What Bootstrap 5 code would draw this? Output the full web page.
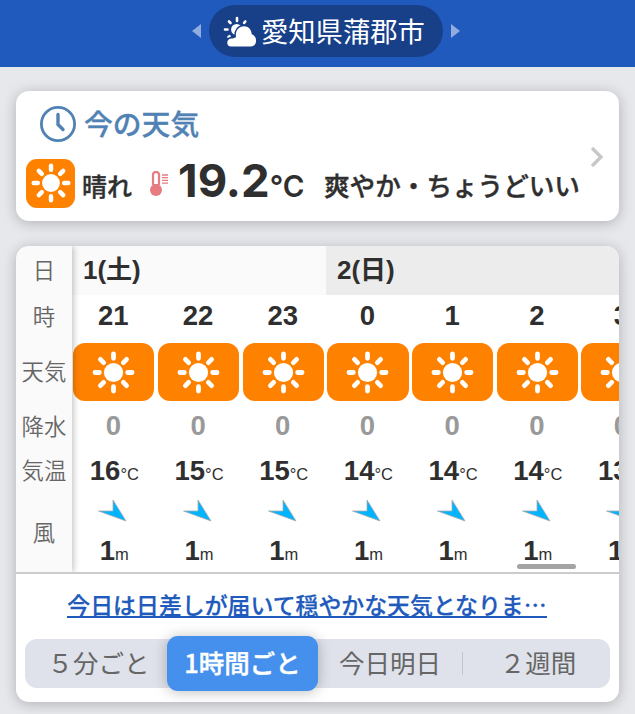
<!DOCTYPE html>
<html lang="ja">
<head>
<meta charset="utf-8">
<meta name="viewport" content="width=device-width, initial-scale=1">
<title>愛知県蒲郡市の天気</title>
<link href="https://cdn.jsdelivr.net/npm/bootstrap@5.3.0/dist/css/bootstrap.min.css" rel="stylesheet">
<style>
body{font-family:"Noto Sans CJK JP",sans-serif;background:#e7e8ec;color:#2f2f2f;height:714px;overflow:hidden;line-height:1}
.topbar{height:67px;background:#205abc;padding-bottom:5px;gap:8px;padding-left:17px}
.topbar .tri{fill:#91acdd}
.place{width:234px;height:52px;background:#184089;color:#fff;font-size:27.3px;padding-left:14px;border-radius:26px}
.placename{margin-left:3px}
.panel{margin:0 16px;border:0;border-radius:13px;box-shadow:0 2px 14px rgba(0,0,0,.24)}
.now{margin-top:24px;height:130px;padding:12px 10px 0}
.now-title{font-size:28.8px;font-weight:500;-webkit-text-stroke:.3px;color:#5182b4;padding-left:13px;height:40px;gap:7px}
.now-row{height:52px;margin-top:14px}
.sunbox{width:49px;height:49px;border-radius:11px;background:#ff8100}
.cond{font-size:25px;font-weight:500;-webkit-text-stroke:.4px;margin-left:7px;padding-top:4px}
.thermo{margin:2px 0 0 17px}
.deg{font-family:Inter,sans-serif;font-weight:700;font-size:45.5px;margin-left:9px;line-height:52px;white-space:nowrap;width:127px}
.deg small{font-size:29.5px;font-weight:600}
.feel{font-size:25.6px;font-weight:500;-webkit-text-stroke:.4px;margin-left:19px;padding-top:4px;white-space:nowrap}
.chev{right:15px;top:55px}
.hourly{margin-top:25px;height:456px}
.scroller{height:326px;border-radius:13px 13px 0 0}
.labels{width:56px;flex:none;background:#fafafa;color:#666;font-size:22.4px;font-weight:350;box-shadow:1px 0 7px rgba(0,0,0,.28);z-index:2}
.labels>div{padding-bottom:3px}
.strip{flex:none}
.day{height:49px;background:#fafafa;font:700 26px "Liberation Sans","Noto Sans CJK JP",sans-serif;padding-left:11px;line-height:49px}
.day-a{width:254px}.day-b{width:424px;background:#ececec}
.hcol{width:84.7px;font-family:"Liberation Sans",sans-serif;font-weight:700;font-size:27.5px}
.r-day{height:49px}.r-hour{height:44px}.r-sky{height:66px}.r-line{height:44px}.r-wind{height:79px}
.digit{padding-right:2px;padding-bottom:2px}
.tile{width:81.3px;height:58.5px;border-radius:12px;background:#ff8100}
.hcol .r-sky{padding-right:1px}
.rain{color:#999}
.unit{font-weight:400;font-size:16.5px}
.wind-arrow{margin:6px 2px 0 0}
.speed{margin-top:14px}
.bar{width:59px;height:5px;border-radius:3px;background:#a4a4a4;left:501px;top:318px;z-index:3}
.summary{border-top:2px solid #ccc;height:67px;padding:0 21px 2px 0}
.summary a{font-size:22.9px;font-weight:500;-webkit-text-stroke:.25px;color:#205abc;line-height:23px;border-bottom:2px solid #205abc;text-decoration:none}
.tabs{height:49px;margin:0 9px;background:#dfe2ea;border-radius:12px;color:#666;font-size:25.5px}
.tabs .seg{flex:none;white-space:nowrap;padding-bottom:3px}
.seg-a{width:142px;padding-left:5px}
.seg-b{width:151px;height:55px;border-radius:11px;background:#4490ec;color:#fff;font-weight:500;-webkit-text-stroke:.4px;box-shadow:0 1px 14px rgba(0,0,0,.26)}
.seg-c{width:144px}.seg-d{width:147px;padding-left:3px}
.sep{width:1px;height:23px;background:#c4c6cc}
</style>
<script src="https://cdn.jsdelivr.net/npm/bootstrap@5.3.0/dist/js/bootstrap.bundle.min.js"></script>
</head>
<body>
<svg class="d-none">
 <symbol id="sun" viewBox="0 0 44 44"><circle cx="22" cy="22" r="9.8" fill="#fff"/><path d="M22 3v4.500M22 36.500v4.500M3 22h4.500M36.500 22h4.500M8.6 8.6l3.3 3.3M32.1 32.1l3.3 3.3M35.4 8.6l-3.3 3.3M11.9 32.1l-3.3 3.3" stroke="#fff" stroke-width="4.900" stroke-linecap="round"/></symbol>
</svg>
<header class="topbar d-flex justify-content-center align-items-center">
 <svg class="tri" width="9" height="14"><path d="M9 0v14L0 7z"/></svg>
 <div class="place d-flex align-items-center">
  <svg width="35" height="32" viewBox="0 0 35 32"><path d="M14 3v3M6 6.500l1.500 1.500M2 14.500h2.500M5.500 22l1-.800M22.300 6.500l-1.200 1.400" stroke="#fff" stroke-width="2.600" stroke-linecap="round"/><circle cx="13.700" cy="14.500" r="5.600" fill="#fff"/><g fill="#fff" stroke="#184089" stroke-width="3" paint-order="stroke"><path d="M8 31.500c-5 0-5-7.500 0-8 2 0 3-.3 5-1.200C12 16 15.500 11.300 21 11.300c4.500 0 7.500 3.500 7.700 8 6 1.700 5.800 12.200-.7 12.200z"/></g></svg>
  <span class="placename">愛知県蒲郡市</span>
 </div>
 <svg class="tri" width="9" height="14"><path d="M0 0v14l9-7z"/></svg>
</header>
<section class="card panel now position-relative">
 <div class="now-title d-flex align-items-center">
  <svg width="38" height="38" viewBox="0 0 38 38" fill="none" stroke="#5182b4" stroke-width="2.800"><circle cx="19" cy="20" r="16.600"/><path d="M19 10.500v10l5 5" stroke-width="3.400" stroke-linecap="round"/></svg>
  <span>今の天気</span>
 </div>
 <div class="now-row d-flex align-items-center">
  <div class="sunbox d-flex align-items-center justify-content-center"><svg width="40" height="40"><use href="#sun"/></svg></div>
  <span class="cond">晴れ</span>
  <svg class="thermo" width="20" height="26" viewBox="0 0 20 26"><path d="M4 14V4a3 3 0 0 1 6 0v10" fill="none" stroke="#e67c81" stroke-width="2.200"/><circle cx="7" cy="19" r="6" fill="#e67c81"/><path d="M4 13h6v4H4z" fill="#e67c81"/><path d="M13 4h6M13 6.700h6M13 9.400h6M13 12.100h6" stroke="#e67c81" stroke-width="1.300"/></svg>
  <span class="deg">19.2<small>°C</small></span>
  <span class="feel">爽やか・ちょうどいい</span>
 </div>
 <svg class="chev position-absolute" width="14" height="22" fill="none" stroke="#c7c7ca" stroke-width="3.300"><path d="M2 2l9 9-9 9"/></svg>
</section>
<section class="card panel hourly">
 <div class="scroller d-flex overflow-hidden position-relative">
  <div class="labels d-flex flex-column text-center">
   <div class="r-day d-flex align-items-center justify-content-center">日</div>
   <div class="r-hour d-flex align-items-center justify-content-center">時</div>
   <div class="r-sky d-flex align-items-center justify-content-center">天気</div>
   <div class="r-line d-flex align-items-center justify-content-center">降水</div>
   <div class="r-line d-flex align-items-center justify-content-center">気温</div>
   <div class="r-wind d-flex align-items-center justify-content-center">風</div>
  </div>
  <div class="strip">
   <div class="d-flex"><div class="day day-a">1(土)</div><div class="day day-b">2(日)</div></div>
   <div class="d-flex" id="hours"></div>
  </div>
  <div class="bar position-absolute"></div>
 </div>
 <div class="summary d-flex align-items-center justify-content-center"><a href="#">今日は日差しが届いて穏やかな天気となりま…</a></div>
 <nav class="tabs d-flex align-items-center">
  <div class="seg seg-a text-center">５分ごと</div>
  <div class="seg seg-b d-flex align-items-center justify-content-center">1時間ごと</div>
  <div class="seg seg-c text-center">今日明日</div>
  <div class="sep"></div>
  <div class="seg seg-d text-center">２週間</div>
 </nav>
</section>
<script>
const hours=[[21,16],[22,15],[23,15],[0,14],[1,14],[2,14],[3,13]];
document.getElementById('hours').innerHTML=hours.map(([h,t])=>`
<div class="hcol d-flex flex-column align-items-center flex-shrink-0">
 <div class="r-hour digit d-flex align-items-center">${h}</div>
 <div class="r-sky d-flex align-items-center"><div class="tile d-flex align-items-center justify-content-center"><svg width="43" height="43"><use href="#sun"/></svg></div></div>
 <div class="r-line digit rain d-flex align-items-center">0</div>
 <div class="r-line d-flex align-items-center"><div>${t}<span class="unit">°C</span></div></div>
 <div class="r-wind d-flex flex-column align-items-center">
  <svg class="wind-arrow flex-shrink-0" width="32" height="24" viewBox="0 0 32 24"><path d="M1.500 12H16V1l13 21z" fill="#00b4ff" stroke="#aaa" stroke-width=".8"/></svg>
  <div class="speed">1<span class="unit">m</span></div>
 </div>
</div>`).join('');
</script>
</body>
</html>
